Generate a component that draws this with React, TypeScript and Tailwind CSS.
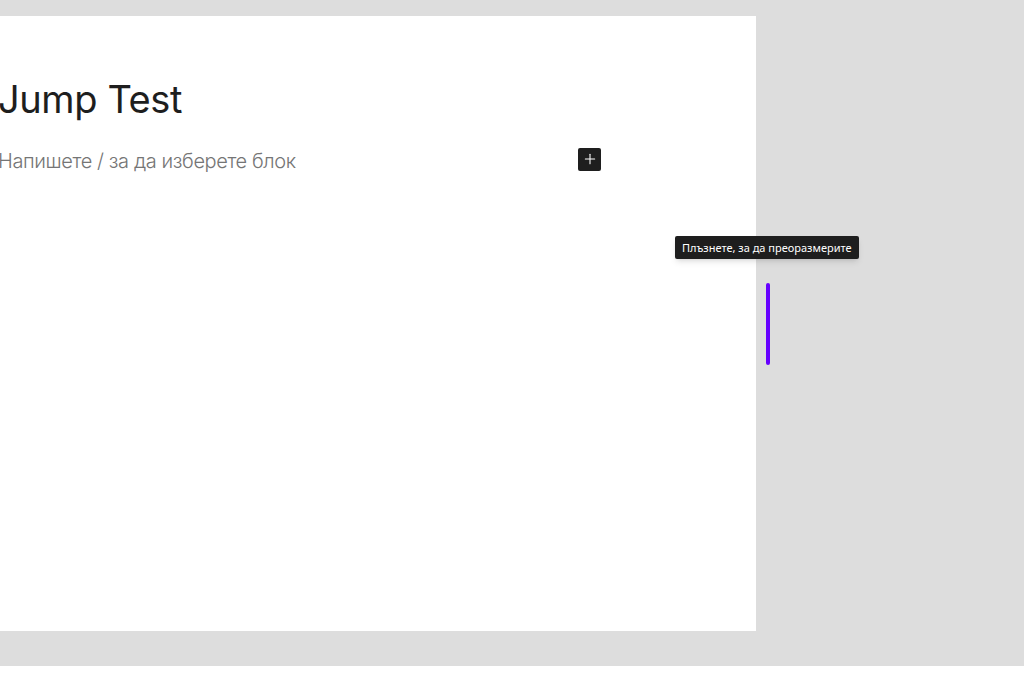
import { Plus } from "lucide-react";

const uiFont = { fontFamily: '"Noto Sans", "Open Sans", sans-serif' };
const editorFont = { fontFamily: 'Inter, "Noto Sans", sans-serif' };

export default function App() {
  return (
    <div className="w-[1024px] h-[682px] flex flex-col bg-white overflow-hidden">
      <div className="h-[666px] bg-[#dddddd] pt-4 relative">
        {/* editor canvas */}
        <div className="w-[756px] h-[615px] bg-white relative overflow-hidden" style={editorFont}>
          <div className="pt-[60px] -ml-[2px]">
            <h1 className="text-[38px] leading-[46px] font-normal text-[#1e1e1e] tracking-[-0.4px]">
              Jump Test
            </h1>
            <div className="mt-[25px] flex items-center h-[28px]">
              <p className="w-[580px] text-[20px] leading-[28px] font-light text-[#757575] tracking-[-0.4px]">
                Напишете / за да изберете блок
              </p>
              <button className="w-[23px] h-[23px] -mt-[4px] rounded-[2px] bg-[#1e1e1e] text-white flex items-center justify-center">
                <Plus size={16} strokeWidth={1.6} />
              </button>
            </div>
          </div>
        </div>

        {/* resize tooltip */}
        <div
          className="absolute left-[675px] top-[236px] h-[23px] px-[7px] rounded-[2px] bg-[#1e1e1e] text-white text-[11px] leading-[23px] shadow-md"
          style={uiFont}
        >
          Плъзнете, за да преоразмерите
        </div>

        {/* resize handle */}
        <div className="absolute left-[766px] top-[283px] w-[4px] h-[82px] rounded-full bg-[#6600ff]" />
      </div>
    </div>
  );
}
